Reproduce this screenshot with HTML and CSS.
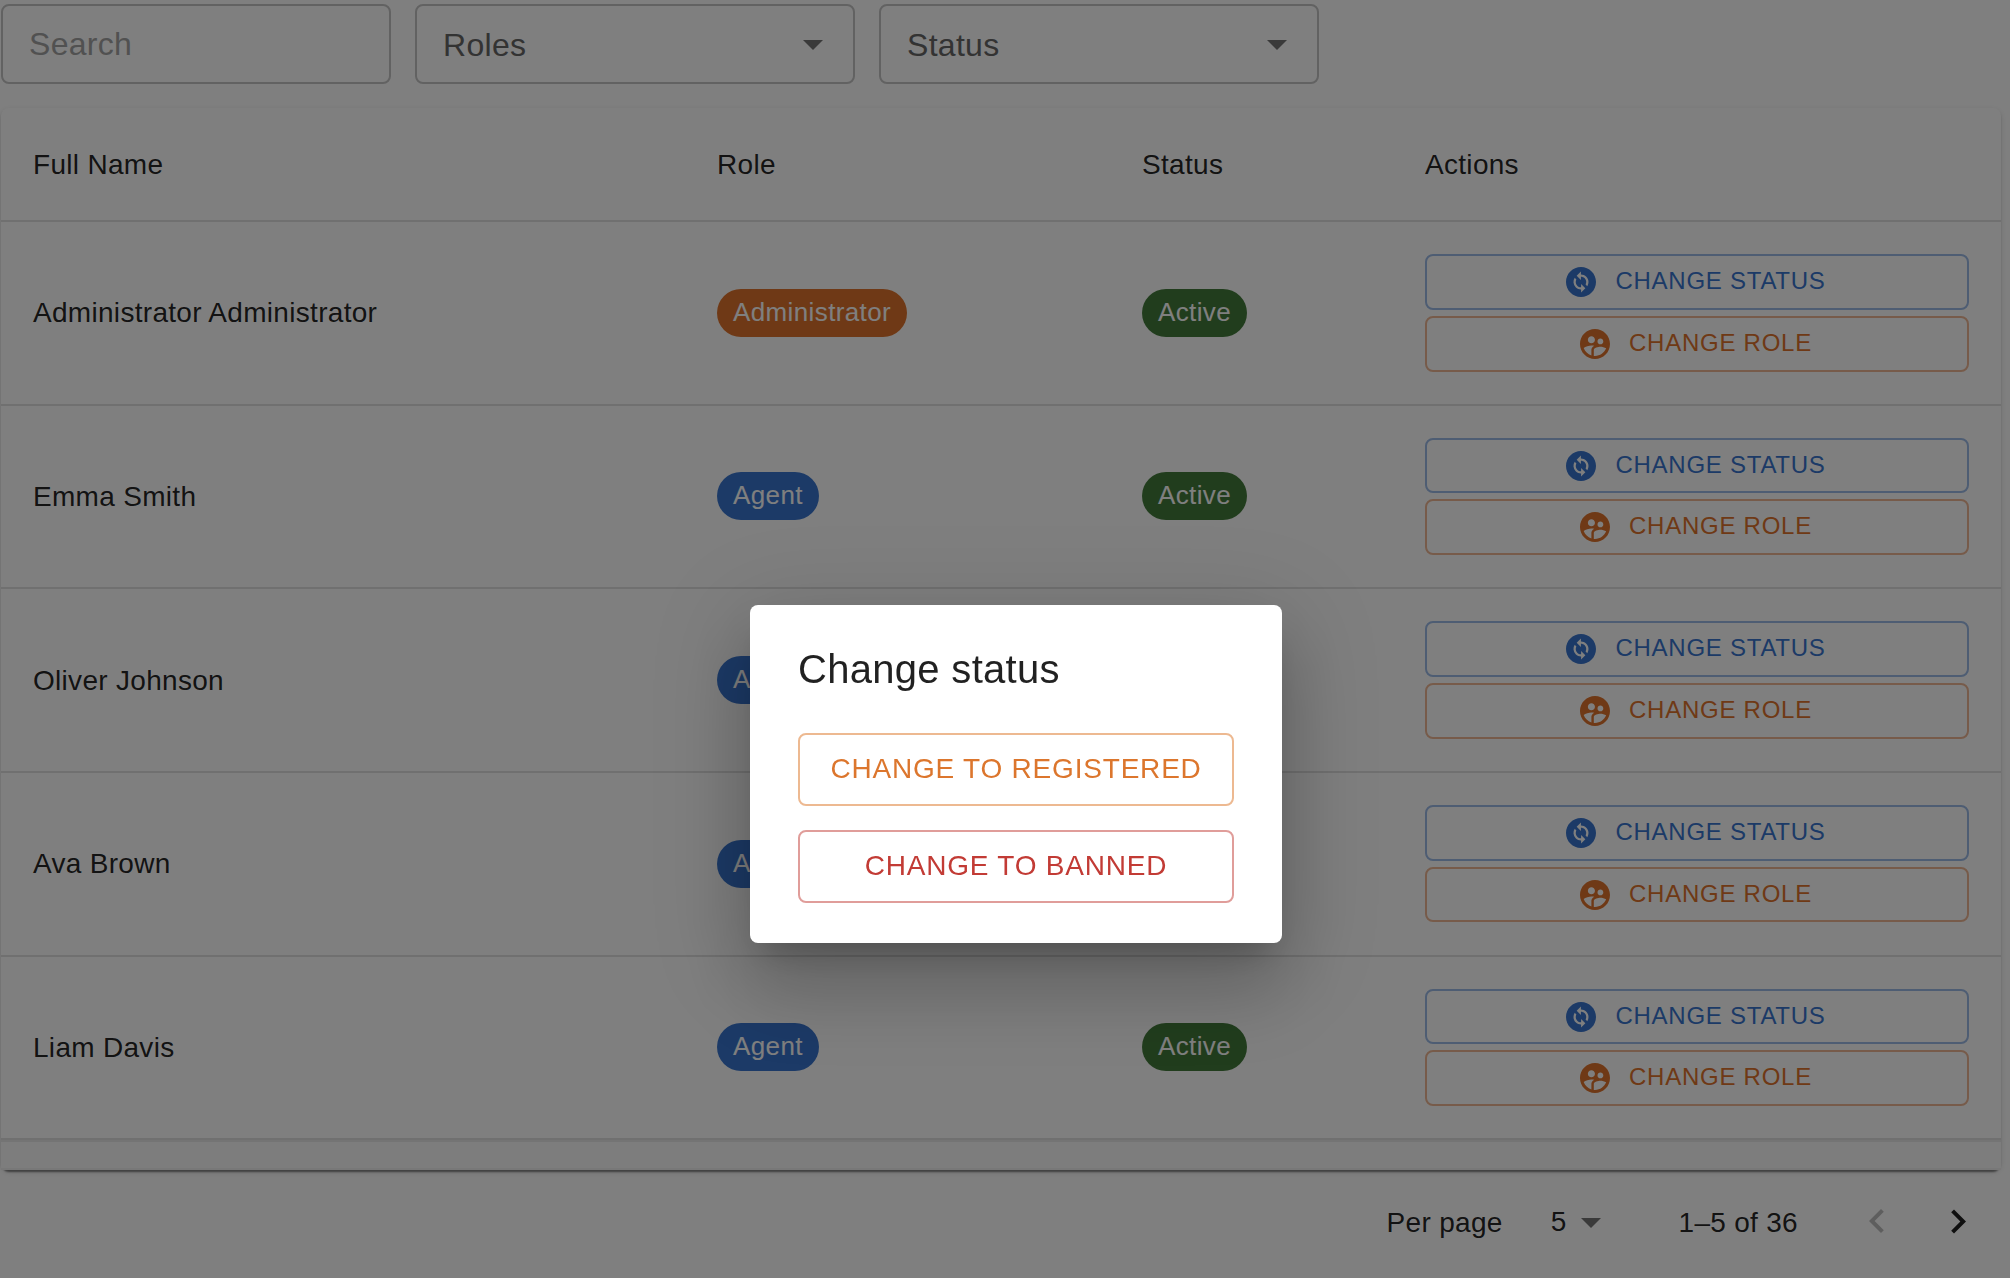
FILE: index.html
```html
<!DOCTYPE html>
<html lang="en">
<head>
<meta charset="utf-8">
<title>Users</title>
<link rel="stylesheet" href="styles.css">
</head>
<body>
<svg class="sprite" aria-hidden="true">
  <symbol id="drop" viewBox="0 0 24 24"><path d="m7 10 5 5 5-5z"/></symbol>
  <symbol id="sync" viewBox="0 0 24 24"><path d="M12 2C6.48 2 2 6.48 2 12s4.480 10 10 10 10-4.480 10-10S17.520 2 12 2zm.06 17v-2.010H12c-1.280 0-2.560-.49-3.540-1.460-1.710-1.710-1.920-4.350-.64-6.290l1.100 1.100c-.71 1.330-.53 3.010.59 4.130.7.700 1.630 1.040 2.560 1.010v-2.140l2.830 2.830L12.060 19zm4.110-4.240-1.100-1.100c.71-1.330.53-3.010-.59-4.130C13.790 8.840 12.900 8.500 12 8.500h-.06v2.150L9.110 7.830 11.940 5v2.020c1.300-.02 2.610.45 3.600 1.450 1.700 1.700 1.910 4.350.63 6.290z"/></symbol>
  <symbol id="group" viewBox="0 0 24 24"><path d="M11.990 2c-5.520 0-10 4.480-10 10s4.480 10 10 10 10-4.480 10-10-4.480-10-10-10zm3.610 6.340c1.070 0 1.930.86 1.930 1.930 0 1.070-.86 1.930-1.930 1.930-1.070 0-1.930-.86-1.930-1.930-.01-1.070.86-1.930 1.930-1.930zm-6-1.580c1.300 0 2.360 1.060 2.360 2.360 0 1.300-1.060 2.360-2.360 2.360s-2.360-1.060-2.360-2.360c0-1.310 1.050-2.360 2.360-2.360zm0 9.130v3.750c-2.400-.75-4.300-2.600-5.140-4.960 1.050-1.120 3.670-1.690 5.140-1.690.53 0 1.200.08 1.900.22-1.640.87-1.900 2.020-1.900 2.680zM11.990 20c-.27 0-.53-.01-.79-.04v-4.070c0-1.420 2.940-2.130 4.400-2.130 1.070 0 2.920.39 3.840 1.150-1.170 2.970-4.060 5.090-7.450 5.090z"/></symbol>
  <symbol id="prev" viewBox="0 0 24 24"><path d="M15.410 16.090l-4.580-4.590 4.580-4.590L14 5.500l-6 6 6 6z"/></symbol>
  <symbol id="next" viewBox="0 0 24 24"><path d="M8.590 16.340l4.580-4.590-4.580-4.590L10 5.750l6 6-6 6z"/></symbol>
</svg>

<main class="page">
  <div class="filters">
    <div class="field search">Search</div>
    <div class="field select"><span>Roles</span><svg class="drop"><use href="#drop"/></svg></div>
    <div class="field select"><span>Status</span><svg class="drop"><use href="#drop"/></svg></div>
  </div>

  <section class="table">
    <div class="row head"><div>Full Name</div><div>Role</div><div>Status</div><div>Actions</div></div>
    <div class="row">
      <div class="name">Administrator Administrator</div>
      <div><span class="chip warning">Administrator</span></div>
      <div><span class="chip success">Active</span></div>
      <div class="actions"><button class="action primary"><svg><use href="#sync"/></svg><span>CHANGE STATUS</span></button><button class="action orange"><svg><use href="#group"/></svg><span>CHANGE ROLE</span></button></div>
    </div>
    <div class="row">
      <div class="name">Emma Smith</div>
      <div><span class="chip info">Agent</span></div>
      <div><span class="chip success">Active</span></div>
      <div class="actions"><button class="action primary"><svg><use href="#sync"/></svg><span>CHANGE STATUS</span></button><button class="action orange"><svg><use href="#group"/></svg><span>CHANGE ROLE</span></button></div>
    </div>
    <div class="row">
      <div class="name">Oliver Johnson</div>
      <div><span class="chip info">Agent</span></div>
      <div><span class="chip success">Active</span></div>
      <div class="actions"><button class="action primary"><svg><use href="#sync"/></svg><span>CHANGE STATUS</span></button><button class="action orange"><svg><use href="#group"/></svg><span>CHANGE ROLE</span></button></div>
    </div>
    <div class="row">
      <div class="name">Ava Brown</div>
      <div><span class="chip info">Agent</span></div>
      <div><span class="chip success">Active</span></div>
      <div class="actions"><button class="action primary"><svg><use href="#sync"/></svg><span>CHANGE STATUS</span></button><button class="action orange"><svg><use href="#group"/></svg><span>CHANGE ROLE</span></button></div>
    </div>
    <div class="row">
      <div class="name">Liam Davis</div>
      <div><span class="chip info">Agent</span></div>
      <div><span class="chip success">Active</span></div>
      <div class="actions"><button class="action primary"><svg><use href="#sync"/></svg><span>CHANGE STATUS</span></button><button class="action orange"><svg><use href="#group"/></svg><span>CHANGE ROLE</span></button></div>
    </div>
    <div class="foot"></div>
  </section>

  <footer class="pager">
    <span class="per-page">Per page</span>
    <span class="size">5</span>
    <svg class="drop"><use href="#drop"/></svg>
    <span class="range">1–5 of 36</span>
    <svg class="prev"><use href="#prev"/></svg>
    <svg class="next"><use href="#next"/></svg>
  </footer>
</main>

<div class="backdrop"></div>
<div class="dialog" role="dialog">
  <h2>Change status</h2>
  <button class="choice orange">CHANGE TO REGISTERED</button>
  <button class="choice red">CHANGE TO BANNED</button>
</div>
</body>
</html>
```
FILE: styles.css
```css
* { box-sizing: border-box; }

body {
  margin: 0;
  width: 2010px;
  height: 1278px;
  overflow: hidden;
  background: #fff;
  color: rgba(0, 0, 0, 0.87);
  font-family: "Liberation Sans", Arial, sans-serif;
  font-size: 28px;
  letter-spacing: 0.3px;
}

button {
  font-family: inherit;
  background: none;
  cursor: pointer;
}

svg { fill: currentColor; flex: none; }
.sprite { display: none; }

.page { padding: 4px 9px 0 1px; }

/* Filters */
.filters {
  display: flex;
  gap: 24px;
  height: 80px;
  margin-bottom: 24px;
}

.field {
  display: flex;
  align-items: center;
  height: 80px;
  border: 2px solid #c4c4c4;
  border-radius: 8px;
  font-size: 32px;
  letter-spacing: 0.3px;
}

.search {
  width: 390px;
  padding: 0 26px;
  color: #a3a3a3;
}

.select {
  width: 440px;
  justify-content: space-between;
  padding: 0 16px 0 26px;
  color: #666;
}

.select span { padding-top: 2px; }

.drop {
  width: 48px;
  height: 48px;
  color: #757575;
}

/* Table */
.table {
  width: 2000px;
  border-radius: 8px;
  background: #fff;
  box-shadow:
    0 4px 2px -2px rgba(0, 0, 0, 0.36),
    0 2px 2px 0 rgba(0, 0, 0, 0.14),
    0 2px 6px 0 rgba(0, 0, 0, 0.12);
}

.row {
  display: grid;
  grid-template-columns: 684px 425px 283px 608px;
  align-items: center;
  height: 183.65px;
  border-bottom: 2px solid #e0e0e0;
}

.row > div { padding: 0 32px; }
.row > .name { padding-top: 1px; }
.head { height: 114px; }
.head > div { padding-top: 2px; }

.foot {
  height: 30px;
  border: solid #f0f0f0;
  border-width: 2px 0;
  border-top-color: #e8e8e8;
  background: #fafafa;
}

.chip {
  display: flex;
  width: fit-content;
  height: 48px;
  padding: 0 16px;
  border-radius: 24px;
  color: #fff;
  font-size: 26px;
  line-height: 46px;
  letter-spacing: 0.38px;
}

.warning { background: #de732c; }
.info { background: #3975ce; }
.success { background: #437b3b; }

.actions {
  display: flex;
  flex-direction: column;
  gap: 6px;
}

/* Outlined buttons */
.action,
.choice {
  border: 2px solid;
  border-radius: 8px;
}

.action {
  display: flex;
  align-items: center;
  justify-content: center;
  gap: 16px;
  height: 55.75px;
  padding: 0 5px 0 0;
  font-size: 24px;
  letter-spacing: 0.75px;
}

.action svg { width: 36px; height: 36px; }
.action span { padding-bottom: 2px; }

.choice {
  height: 73px;
  padding: 0 0 1px;
  font-size: 28px;
  letter-spacing: 0.8px;
}

.primary { color: #3975ce; border-color: #9cbae7; }
.orange { color: #dc762d; border-color: #edb991; }
.action.orange { color: #de732c; border-color: #eeb795; }
.red { color: #c23b35; border-color: #e09d9a; }

/* Pagination */
.pager {
  display: flex;
  align-items: center;
  justify-content: flex-end;
  height: 104px;
  padding-right: 19px;
}

.per-page, .range { padding-top: 1px; }
.size { margin-left: 48px; }
.pager .drop { margin-left: 0; }
.range { margin-left: 64px; }
.prev { width: 48px; height: 48px; margin-left: 55px; color: #bdbdbd; }
.next { width: 48px; height: 48px; margin-left: 33px; }

/* Modal */
.backdrop {
  position: fixed;
  inset: 0;
  background: rgba(0, 0, 0, 0.5);
}

.dialog {
  position: absolute;
  left: 750px;
  top: 605px;
  display: flex;
  flex-direction: column;
  gap: 24px;
  width: 532px;
  height: 338px;
  padding: 32px 48px 40px;
  border-radius: 8px;
  background: #fff;
  box-shadow:
    0 22px 30px -14px rgba(0, 0, 0, 0.2),
    0 48px 76px 6px rgba(0, 0, 0, 0.14),
    0 18px 92px 16px rgba(0, 0, 0, 0.12);
}

.dialog h2 {
  margin: 0 0 8px;
  font-size: 40px;
  font-weight: 400;
  line-height: 64px;
  letter-spacing: 0.3px;
}
```
